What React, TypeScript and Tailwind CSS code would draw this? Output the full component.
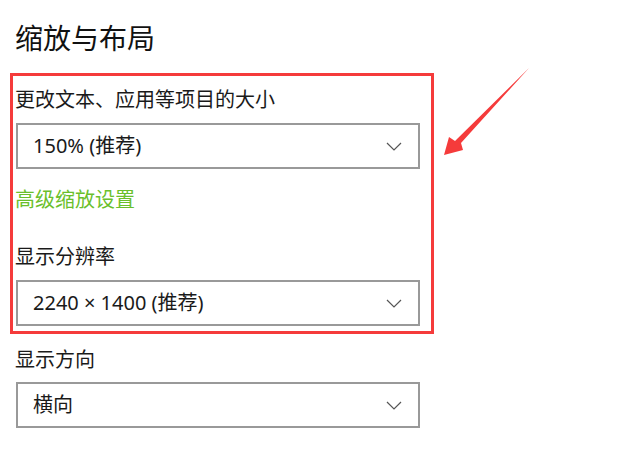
const font = { fontFamily: '"Noto Sans", "Noto Sans CJK SC", sans-serif' };

function Chevron() {
  return (
    <svg width="16" height="9" viewBox="0 0 16 9" className="shrink-0">
      <path d="M1 1 L8 8 L15 1" fill="none" stroke="#555" strokeWidth="1.2" />
    </svg>
  );
}

function Dropdown({ value, className = "" }: { value: string; className?: string }) {
  return (
    <div
      className={`flex h-[46px] w-[404px] items-center justify-between border-2 border-[#999999] bg-white pl-[15px] pr-[16px] text-[20px] leading-[28px] text-[#1a1a1a] ${className}`}
    >
      <span>{value}</span>
      <Chevron />
    </div>
  );
}

export default function App() {
  return (
    <div className="relative h-[449px] w-[640px] overflow-hidden bg-white" style={font}>
      <div className="flex flex-col pt-[18px]">
        <h1 className="pl-[15px] text-[28px] leading-[40px] font-normal text-[#111]">缩放与布局</h1>

        <div className="ml-[10px] mt-[15px] flex w-[424px] flex-col border-[3px] border-[#f53b3b] pb-[5px] pl-[3px] pt-[10px]">
          <p className="-ml-[1px] text-[20px] leading-[28px] text-[#1a1a1a]">更改文本、应用等项目的大小</p>
          <Dropdown value="150% (推荐)" className="mt-[9px]" />
          <p className="-ml-[1px] mt-[17px] text-[20px] leading-[28px] text-[#6abf2b]">高级缩放设置</p>
          <p className="-ml-[1px] mt-[29px] text-[20px] leading-[28px] text-[#1a1a1a]">显示分辨率</p>
          <Dropdown value="2240 × 1400 (推荐)" className="mt-[9px]" />
        </div>

        <div className="flex flex-col pl-[16px]">
          <p className="-ml-[1px] mt-[12px] text-[20px] leading-[28px] text-[#1a1a1a]">显示方向</p>
          <Dropdown value="横向" className="mt-[8px]" />
        </div>
      </div>

      <svg className="absolute left-0 top-0" width="640" height="449" viewBox="0 0 640 449">
        <polygon
          points="529,68 461,143 463,150 444,155 449,137 455,141"
          fill="#f53b3b"
        />
      </svg>
    </div>
  );
}
